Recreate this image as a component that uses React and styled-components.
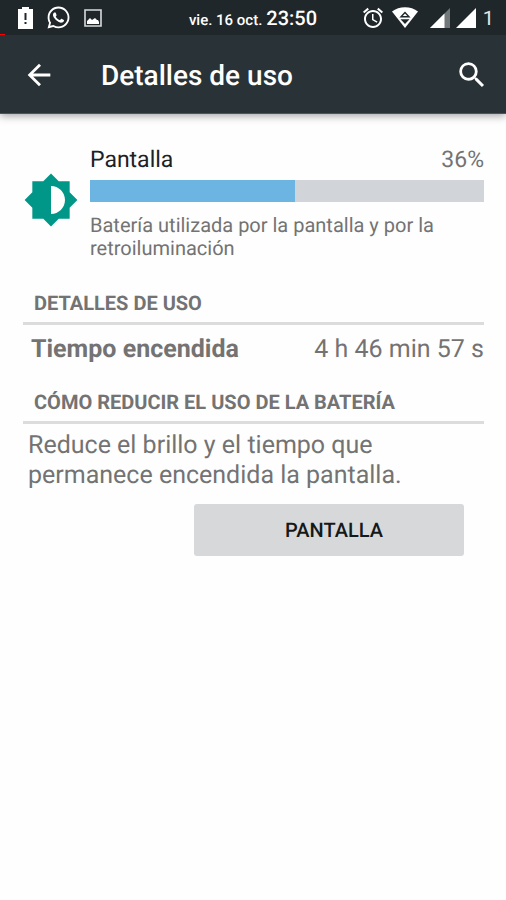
import React from "react";
import styled, { createGlobalStyle } from "styled-components";
import { FaWhatsapp } from "react-icons/fa";

const GlobalStyle = createGlobalStyle`
  *, *::before, *::after { box-sizing: border-box; }
  body {
    margin: 0;
    background: #fefefe;
    color: #737373;
    font-family: Roboto, "Noto Sans", sans-serif;
    text-rendering: geometricPrecision;
  }
  h1, h2, p, dl, dt, dd { margin: 0; }
`;

const Screen = styled.div`
  min-height: 100vh;
`;

const StatusBar = styled.div`
  position: relative;
  display: grid;
  grid-template-columns: 1fr auto 1fr;
  align-items: center;
  height: 35px;
  padding: 0 12px;
  background: #20272a;
  color: #fff;
`;

const RecordingMark = styled.span`
  position: absolute;
  left: 0;
  bottom: 0;
  width: 5px;
  height: 1px;
  background: #f00;
`;

const StatusGroup = styled.div`
  display: flex;
  align-items: center;
  justify-content: ${({ $end }) => ($end ? "flex-end" : "flex-start")};
  gap: ${({ $gap }) => $gap}px;
  padding-left: 6px;

  svg { display: block; flex: none; }
`;

const Signals = styled.div`
  display: flex;
  gap: 6px;
  margin-left: 5px;
`;

const Clock = styled.div`
  display: flex;
  align-items: baseline;
  gap: 4px;
  font-size: 15px;
  font-weight: 500;
  line-height: 24px;
  padding-top: 2px;
`;

const Time = styled.time`
  font-size: 20px;
`;

const SimNumber = styled.span`
  font-size: 20px;
  line-height: 24px;
  color: #e6e8e8;
`;

const AppBar = styled.header`
  display: flex;
  align-items: center;
  height: 79px;
  padding: 0 17px 0 22px;
  background: #283237;
  border-bottom: 1px solid #4d5356;
  box-shadow: 0 2px 8px rgba(0, 0, 0, 0.36);
  color: #fff;
`;

const IconButton = styled.button`
  display: block;
  padding: 1px 0 0;
  border: 0;
  background: none;
  color: inherit;
  cursor: pointer;

  svg { display: block; }
`;

const Title = styled.h1`
  flex: 1;
  margin-left: 45px;
  padding-top: 4px;
  font-size: 28px;
  font-weight: 500;
  line-height: 34px;
`;

const Content = styled.main`
  padding: 32px 22px 24px 23px;
`;

const Summary = styled.section`
  display: flex;
  gap: 11px;
`;

const SummaryIcon = styled.div`
  flex: none;
  padding-top: 26px;

  svg { display: block; }
`;

const SummaryBody = styled.div`
  flex: 1;
  min-width: 0;
`;

const SummaryHeading = styled.div`
  display: flex;
  justify-content: space-between;
  font-size: 23px;
  line-height: 28px;
`;

const SummaryName = styled.h2`
  color: #1c2225;
  font: inherit;
`;

const Meter = styled.div`
  height: 22px;
  margin-top: 6px;
  background: #d1d5d9;
`;

const MeterFill = styled.div`
  height: 100%;
  background: #6cb4e1;
`;

const SummaryText = styled.p`
  margin-top: 12px;
  font-size: 20px;
  line-height: 23px;
`;

const SectionTitle = styled.h2`
  margin-top: ${({ $first }) => ($first ? 30 : 24)}px;
  padding: 0 11px 6px;
  border-bottom: 3px solid #dcdcdc;
  font-size: 20px;
  font-weight: 700;
  line-height: 26px;
  text-transform: uppercase;
`;

const DetailRow = styled.dl`
  display: flex;
  justify-content: space-between;
  margin-top: 10px;
  padding-left: 8px;
  font-size: 25px;
  line-height: 30px;

  dt { font-weight: 700; }
`;

const Advice = styled.p`
  max-width: 420px;
  margin-top: 7px;
  padding-left: 5px;
  font-size: 25px;
  line-height: 30px;
`;

const Actions = styled.div`
  display: flex;
  justify-content: flex-end;
  margin-top: 13px;
  padding-right: 20px;
`;

const ActionButton = styled.button`
  width: 270px;
  height: 52px;
  padding: 0 0 0 10px;
  border: 0;
  border-radius: 3px;
  background: #d7d8d9;
  color: #14191b;
  font: 500 20px/24px Roboto, "Noto Sans", sans-serif;
  text-rendering: inherit;
  text-transform: uppercase;
  cursor: pointer;
`;

const BatteryAlertIcon = () => (
  <svg width="15" height="22" viewBox="0 0 15 22" aria-hidden="true">
    <path fill="#fff" fillRule="evenodd" d="M4 0h7v2h4v20H0V2h4zM6.5 6v7h2V6zM6.5 15v2h2v-2z" />
  </svg>
);

const ImageIcon = () => (
  <svg width="18" height="18" viewBox="0 0 18 18" aria-hidden="true">
    <path fill="none" stroke="#d9dbdc" strokeWidth="1.6" d="M1 1h16v16H1z" />
    <path fill="#fff" d="M3 15v-3l3-3 2 2 3-2 2 2h1l1 2v2z" />
  </svg>
);

const AlarmIcon = () => (
  <svg width="24" height="24" viewBox="0 0 24 24" fill="#fff" aria-hidden="true">
    <path d="M22 5.72l-4.6-3.86-1.29 1.53 4.6 3.86L22 5.72zM7.88 3.39L6.6 1.86 2 5.71l1.29 1.53 4.59-3.85zM12.5 8H11v6l4.75 2.85.75-1.23-4-2.37V8zM12 4c-4.97 0-9 4.03-9 9s4.02 9 9 9c4.97 0 9-4.03 9-9s-4.03-9-9-9zm0 16c-3.87 0-7-3.13-7-7s3.13-7 7-7 7 3.13 7 7-3.13 7-7 7z" />
  </svg>
);

const WifiIcon = () => (
  <svg width="26" height="21" viewBox="0 0 26 21" aria-hidden="true">
    <path fill="#fff" d="M0 4.5C7-1.2 19-1.2 26 4.5L13 21z" />
    <path fill="none" stroke="#20272a" strokeWidth="1.4" d="M13 5.5L9 9.8h8z" />
    <path fill="#20272a" d="M8.5 12.3h9L13 17z" />
  </svg>
);

const SignalIcon = ({ partial }) => (
  <svg width="20" height="20" viewBox="0 0 20 20" aria-hidden="true">
    <path fill={partial ? "#727779" : "#fff"} d="M0 20L20 0v20z" />
    {partial && <path fill="#fff" d="M0 20L14.5 5.5V20z" />}
  </svg>
);

const BackIcon = () => (
  <svg width="34" height="34" viewBox="0 0 24 24" fill="currentColor" aria-hidden="true">
    <path d="M20 11H7.83l5.59-5.59L12 4l-8 8 8 8 1.41-1.41L7.83 13H20v-2z" />
  </svg>
);

const SearchIcon = () => (
  <svg width="34" height="34" viewBox="0 0 24 24" fill="currentColor" aria-hidden="true">
    <path d="M15.5 14h-.79l-.28-.27A6.471 6.471 0 0 0 16 9.5 6.5 6.5 0 1 0 9.5 16c1.61 0 3.09-.59 4.23-1.57l.27.28v.79l5 4.99L20.49 19l-4.99-5zm-6 0C7.01 14 5 11.99 5 9.5S7.01 5 9.5 5 14 7.01 14 9.5 11.99 14 9.5 14z" />
  </svg>
);

const BrightnessIcon = () => (
  <svg width="56" height="56" viewBox="0 0 24 24" fill="#009688" aria-hidden="true">
    <path d="M20 15.31L23.31 12 20 8.69V4h-4.69L12 .69 8.69 4H4v4.69L.69 12 4 15.31V20h4.69L12 23.31 15.31 20H20v-4.69zM12 18V6c3.31 0 6 2.69 6 6s-2.69 6-6 6z" />
  </svg>
);

const barShare = 52;

export default function App() {
  return (
    <Screen>
      <GlobalStyle />
      <StatusBar>
        <StatusGroup $gap={13}>
          <BatteryAlertIcon />
          <FaWhatsapp size={25} aria-hidden="true" />
          <ImageIcon />
        </StatusGroup>
        <Clock>
          <span>vie. 16 oct.</span>
          <Time>23:50</Time>
        </Clock>
        <StatusGroup $end $gap={7}>
          <AlarmIcon />
          <WifiIcon />
          <Signals>
            <SignalIcon partial />
            <SignalIcon />
          </Signals>
          <SimNumber>1</SimNumber>
        </StatusGroup>
        <RecordingMark />
      </StatusBar>
      <AppBar>
        <IconButton type="button" aria-label="Atrás">
          <BackIcon />
        </IconButton>
        <Title>Detalles de uso</Title>
        <IconButton type="button" aria-label="Buscar">
          <SearchIcon />
        </IconButton>
      </AppBar>
      <Content>
        <Summary>
          <SummaryIcon>
            <BrightnessIcon />
          </SummaryIcon>
          <SummaryBody>
            <SummaryHeading>
              <SummaryName id="usage-name">Pantalla</SummaryName>
              <span>36%</span>
            </SummaryHeading>
            <Meter
              role="progressbar"
              aria-labelledby="usage-name"
              aria-valuemin={0}
              aria-valuemax={100}
              aria-valuenow={barShare}
            >
              <MeterFill style={{ width: `${barShare}%` }} />
            </Meter>
            <SummaryText>Batería utilizada por la pantalla y por la retroiluminación</SummaryText>
          </SummaryBody>
        </Summary>
        <SectionTitle $first>Detalles de uso</SectionTitle>
        <DetailRow>
          <dt>Tiempo encendida</dt>
          <dd>4 h 46 min 57 s</dd>
        </DetailRow>
        <SectionTitle>Cómo reducir el uso de la batería</SectionTitle>
        <Advice>Reduce el brillo y el tiempo que permanece encendida la pantalla.</Advice>
        <Actions>
          <ActionButton type="button">Pantalla</ActionButton>
        </Actions>
      </Content>
    </Screen>
  );
}
